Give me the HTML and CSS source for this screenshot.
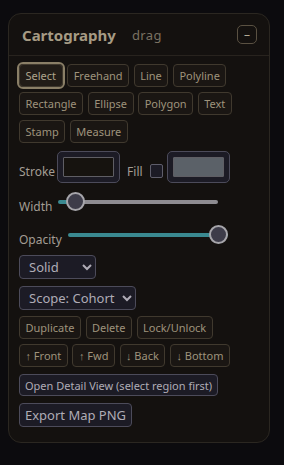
FILE: index.html
```html
<!DOCTYPE html>
<html>
<head>
    <title>Cartography</title>
    <link rel="stylesheet" href="styles.css">
</head>
<body>
    <div class="panel">
        <div class="panel-head">
            <span class="title">Cartography</span>
            <span class="drag">drag</span>
            <button class="collapse">&ndash;</button>
        </div>

        <div class="panel-body">
            <!-- drawing tools -->
            <div class="btn-row tools">
                <button class="btn active">Select</button>
                <button class="btn">Freehand</button>
                <button class="btn">Line</button>
                <button class="btn">Polyline</button>
                <button class="btn">Rectangle</button>
                <button class="btn">Ellipse</button>
                <button class="btn">Polygon</button>
                <button class="btn">Text</button>
                <button class="btn">Stamp</button>
                <button class="btn">Measure</button>
            </div>

            <div class="colors">
                <label class="lbl">Stroke</label>
                <input type="color" class="swatch" value="#16130f">
                <label class="lbl fill-lbl">Fill</label>
                <input type="checkbox" class="check">
                <input type="color" class="swatch" value="#5b6168">
            </div>

            <div class="slider-row width-row">
                <label class="lbl">Width</label>
                <input type="range" class="slider" min="1" max="20" value="2" style="--fill: 10.6%">
            </div>

            <div class="slider-row opacity-row">
                <label class="lbl">Opacity</label>
                <input type="range" class="slider" min="0" max="1" step="0.05" value="1" style="--fill: 100%">
            </div>

            <select class="dd dash">
                <option>Solid</option>
                <option>Dashed</option>
                <option>Dotted</option>
            </select>

            <select class="dd scope">
                <option>Scope: Cohort</option>
                <option>Scope: Personal</option>
            </select>

            <!-- shape actions -->
            <div class="btn-row actions">
                <button class="btn">Duplicate</button>
                <button class="btn">Delete</button>
                <button class="btn">Lock/Unlock</button>
            </div>
            <div class="btn-row order">
                <button class="btn">&uarr; Front</button>
                <button class="btn">&uarr; Fwd</button>
                <button class="btn">&darr; Back</button>
                <button class="btn">&darr; Bottom</button>
            </div>

            <button class="plain detail">Open Detail View (select region first)</button>
            <button class="plain export">Export Map PNG</button>
        </div>
    </div>
</body>
</html>
```

FILE: styles.css
```css
body {
    background: #0c0b0e;
    margin: 0;
    padding: 13px 0 0 8px;
    font-family: "Noto Sans", "Open Sans", sans-serif;
}

.panel {
    width: 260px;
    height: 428px;
    background: #14110f;
    border: 1px solid #2b2721;
    border-radius: 13px;
}

.panel-head {
    display: flex;
    align-items: center;
    height: 41px;
    padding: 0 12px 0 13px;
    border-bottom: 1px solid #28231e;
}

.title {
    font-size: 15px;
    font-weight: bold;
    color: #a69b84;
}

.drag {
    margin-left: 16px;
    font-size: 13px;
    letter-spacing: 0.4px;
    color: #7a7162;
}

.collapse {
    margin-left: auto;
    width: 20px;
    height: 19px;
    padding: 0;
    background: transparent;
    border: 1px solid #5a5142;
    border-radius: 5px;
    color: #b3aa94;
    font-family: "Noto Sans", sans-serif;
    font-size: 12px;
    line-height: 16px;
}

.panel-body {
    display: flex;
    flex-direction: column;
    align-items: flex-start;
    padding: 8px 10px 0 10px;
}

.btn-row {
    display: flex;
    flex-wrap: wrap;
    column-gap: 4.6px;
    row-gap: 5px;
}

.btn {
    height: 23px;
    padding: 0 5.5px;
    background: #1a1613;
    border: 1px solid #40392e;
    border-radius: 4px;
    color: #9e937c;
    font-family: "Noto Sans", sans-serif;
    font-size: 11px;
}

.btn.active {
    background: #211c17;
    outline: 2px solid #8a7f67;
    outline-offset: 0;
    color: #aea48c;
}

.lbl {
    font-size: 12px;
    line-height: 16px;
    color: #a39d94;
}

.colors {
    display: flex;
    align-items: flex-end;
    margin-top: 8px;
}

.colors .lbl {
    margin-bottom: 3px;
}

.swatch {
    -webkit-appearance: none;
    appearance: none;
    width: 63px;
    height: 32px;
    margin: 0 0 0 2px;
    padding: 5px;
    background: #1c1b25;
    border: 1px solid #4c4b5a;
    border-radius: 5px;
    box-sizing: border-box;
}

.swatch::-webkit-color-swatch-wrapper {
    padding: 0;
}

.swatch::-webkit-color-swatch {
    border: 1px solid #5f5e64;
    border-radius: 1px;
}

.fill-lbl {
    margin-left: 7px;
}

.check {
    -webkit-appearance: none;
    appearance: none;
    width: 13px;
    height: 14px;
    margin: 0 2px 5px 7px;
    background: #1c1b25;
    border: 1px solid #5e5d6a;
    border-radius: 2px;
}

.slider-row {
    display: flex;
    align-items: flex-end;
}

.width-row {
    margin-top: 9px;
}

.opacity-row {
    margin-top: 10px;
}

.slider {
    -webkit-appearance: none;
    appearance: none;
    width: 160px;
    height: 19px;
    margin: 0 0 4px 6px;
    background: transparent;
}

.slider::-webkit-slider-runnable-track {
    height: 4px;
    border-radius: 2px;
    background: linear-gradient(to right, #3a8990 var(--fill), #8e8c91 var(--fill));
}

.slider::-webkit-slider-thumb {
    -webkit-appearance: none;
    appearance: none;
    width: 19px;
    height: 19px;
    margin-top: -7.5px;
    box-sizing: border-box;
    border-radius: 50%;
    background: #3d3c49;
    border: 2px solid #a6a5aa;
}

.dd {
    height: 24px;
    padding: 0 4px 0 5px;
    background: #1c1b25;
    border: 1px solid #4c4b5a;
    border-radius: 4px;
    color: #afacb6;
    font-family: "Noto Sans", sans-serif;
    font-size: 13px;
}

.dash {
    width: 77px;
    margin-top: 7px;
}

.scope {
    width: 117px;
    margin-top: 7px;
}

.actions {
    margin-top: 6px;
}

.order {
    margin-top: 5px;
}

.plain {
    padding: 0 5px;
    background: #1c1b25;
    border: 1px solid #4c4b5a;
    border-radius: 4px;
    color: #afacb6;
    font-family: "Noto Sans", sans-serif;
}

.detail {
    height: 22px;
    margin-top: 7px;
    font-size: 11px;
}

.export {
    height: 24px;
    margin-top: 7px;
    font-size: 13px;
}
```
